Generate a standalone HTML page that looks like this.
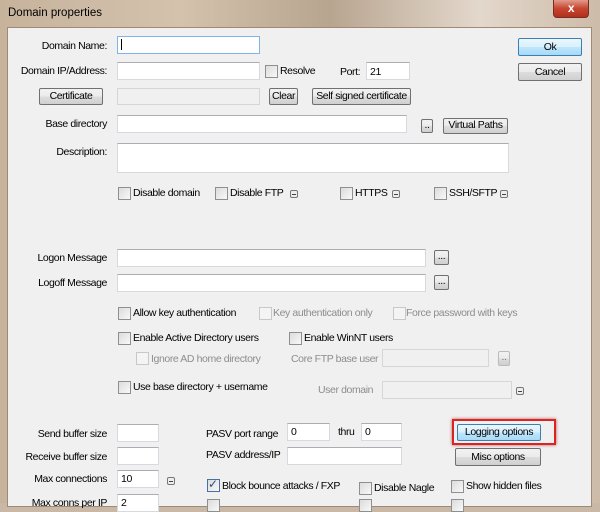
<!DOCTYPE html>
<html><head><meta charset="utf-8"><style>
*{box-sizing:border-box;margin:0;padding:0}
body{width:600px;height:503px;overflow:hidden;font-family:"Liberation Sans",sans-serif;font-size:10.5px;letter-spacing:-0.4px;color:#000;position:relative;background:#c9b8a6}
.frame{position:absolute;left:0;top:0;width:600px;height:503px;background:linear-gradient(90deg,#c7b39c 0%,#d4c2ad 30%,#b8a590 55%,#e3d8cc 80%,#cdbba8 100%)}
.client{position:absolute;left:7px;top:27px;width:585px;height:480px;background:#f0f0f0;border:1px solid #a08a74}
.t{position:absolute;white-space:nowrap;line-height:13px}
.r{text-align:right}
.in{position:absolute;background:#fff;border:1px solid #d6d9dd;border-top-color:#abadb3}
.dis{background:#f0f0f0;border-color:#d6d6d6}
.btn{position:absolute;border:1px solid #707070;border-radius:2px;background:linear-gradient(#f2f2f2,#ebebeb 50%,#dddddd 51%,#cfcfcf);text-align:center;line-height:14px;white-space:nowrap}
.cb{position:absolute;width:13px;height:13px;border:1px solid #8e8f8f;background:linear-gradient(135deg,#dcdcdc,#f8f8f8)}
.cbd{border-color:#c8c8c8;background:#f4f4f4}
.g{color:#8d8d8d}
.ic{position:absolute;width:8px;height:8px;border:1px solid #777;border-radius:2px;background:#eee}
.ic:after{content:"";position:absolute;left:1px;top:3px;width:4px;height:1px;background:#444}
</style></head><body>
<div class="frame"></div>
<div class="t" style="left:8px;top:7px;font-size:11.5px;letter-spacing:0">Domain properties</div>
<div style="position:absolute;left:553px;top:0;width:36px;height:18px;border:1px solid #7a2c22;border-top:none;border-radius:0 0 4px 4px;background:linear-gradient(#e39a8c,#c6452f 50%,#b0301e);color:#fff;text-align:center;font-weight:bold;font-size:12px;line-height:16px">x</div>
<div class="client"></div>

<div class="t r" style="left:0;width:107px;top:40px">Domain Name:</div>
<div class="in" style="left:117px;top:36px;width:143px;height:18px;border-color:#7eb4ea"></div>
<div style="position:absolute;left:121px;top:39px;width:1px;height:11px;background:#000"></div>
<div class="t r" style="left:0;width:107px;top:65px">Domain IP/Address:</div>
<div class="in" style="left:117px;top:62px;width:143px;height:18px"></div>
<div class="cb" style="left:265px;top:65px"></div><div class="t" style="left:280px;top:65px">Resolve</div>
<div class="t" style="left:340px;top:66px">Port:</div>
<div class="in" style="left:366px;top:62px;width:44px;height:18px"></div><div class="t" style="left:370px;top:66px">21</div>

<div class="btn" style="left:39px;top:88px;width:64px;height:17px">Certificate</div>
<div class="in dis" style="left:117px;top:88px;width:143px;height:17px"></div>
<div class="btn" style="left:269px;top:88px;width:29px;height:17px">Clear</div>
<div class="btn" style="left:312px;top:88px;width:99px;height:17px">Self signed certificate</div>

<div class="t r" style="left:0;width:107px;top:118px">Base directory</div>
<div class="in" style="left:117px;top:115px;width:290px;height:18px"></div>
<div class="btn" style="left:421px;top:119px;width:12px;height:14px;line-height:10px">..</div>
<div class="btn" style="left:443px;top:118px;width:65px;height:16px;line-height:13px">Virtual Paths</div>

<div class="t r" style="left:0;width:107px;top:146px">Description:</div>
<div class="in" style="left:117px;top:143px;width:392px;height:30px"></div>

<div class="cb" style="left:118px;top:187px"></div><div class="t" style="left:133px;top:187px">Disable domain</div>
<div class="cb" style="left:215px;top:187px"></div><div class="t" style="left:230px;top:187px">Disable FTP</div><div class="ic" style="left:290px;top:190px"></div>
<div class="cb" style="left:340px;top:187px"></div><div class="t" style="left:355px;top:187px">HTTPS</div><div class="ic" style="left:392px;top:190px"></div>
<div class="cb" style="left:434px;top:187px"></div><div class="t" style="left:449px;top:187px">SSH/SFTP</div><div class="ic" style="left:500px;top:190px"></div>

<div class="t r" style="left:0;width:107px;top:252px">Logon Message</div>
<div class="in" style="left:117px;top:249px;width:309px;height:18px"></div>
<div class="btn" style="left:434px;top:250px;width:15px;height:15px;line-height:10px">...</div>
<div class="t r" style="left:0;width:107px;top:277px">Logoff Message</div>
<div class="in" style="left:117px;top:274px;width:309px;height:18px"></div>
<div class="btn" style="left:434px;top:275px;width:15px;height:15px;line-height:10px">...</div>

<div class="cb" style="left:118px;top:307px"></div><div class="t" style="left:133px;top:307px">Allow key authentication</div>
<div class="cb cbd" style="left:259px;top:307px"></div><div class="t g" style="left:273px;top:307px">Key authentication only</div>
<div class="cb cbd" style="left:393px;top:307px"></div><div class="t g" style="left:406px;top:307px">Force password with keys</div>

<div class="cb" style="left:118px;top:332px"></div><div class="t" style="left:133px;top:332px">Enable Active Directory users</div>
<div class="cb" style="left:289px;top:332px"></div><div class="t" style="left:304px;top:332px">Enable WinNT users</div>

<div class="cb cbd" style="left:136px;top:352px"></div><div class="t g" style="left:151px;top:353px">Ignore AD home directory</div>
<div class="t g" style="left:291px;top:353px">Core FTP base user</div>
<div class="in dis" style="left:382px;top:349px;width:107px;height:18px"></div>
<div class="btn" style="left:498px;top:351px;width:12px;height:15px;line-height:10px;border-color:#bbb;color:#777">..</div>

<div class="cb" style="left:118px;top:381px"></div><div class="t" style="left:133px;top:381px">Use base directory + username</div>
<div class="t g" style="left:318px;top:384px">User domain</div>
<div class="in dis" style="left:382px;top:381px;width:130px;height:18px"></div>
<div class="ic" style="left:516px;top:387px"></div>

<div class="t r" style="left:0;width:107px;top:428px">Send buffer size</div>
<div class="in" style="left:117px;top:424px;width:42px;height:18px"></div>
<div class="t r" style="left:0;width:107px;top:451px">Receive buffer size</div>
<div class="in" style="left:117px;top:447px;width:42px;height:18px"></div>
<div class="t r" style="left:0;width:107px;top:473px">Max connections</div>
<div class="in" style="left:117px;top:470px;width:42px;height:18px"></div><div class="t" style="left:121px;top:473px">10</div>
<div class="ic" style="left:167px;top:477px"></div>
<div class="t r" style="left:0;width:107px;top:497px">Max conns per IP</div>
<div class="in" style="left:117px;top:494px;width:42px;height:18px"></div><div class="t" style="left:121px;top:497px">2</div>

<div class="t" style="left:206px;top:428px">PASV port range</div>
<div class="in" style="left:287px;top:423px;width:43px;height:18px"></div><div class="t" style="left:291px;top:426px">0</div>
<div class="t" style="left:338px;top:426px">thru</div>
<div class="in" style="left:361px;top:423px;width:41px;height:18px"></div><div class="t" style="left:365px;top:426px">0</div>
<div class="t" style="left:206px;top:449px">PASV address/IP</div>
<div class="in" style="left:287px;top:447px;width:115px;height:18px"></div>

<div class="cb" style="left:207px;top:479px;border-color:#4a6fa5"></div><div class="t" style="left:208px;top:478px;color:#2a4f8a;font-size:12px">✓</div>
<div class="t" style="left:222px;top:480px">Block bounce attacks / FXP</div>
<div class="cb" style="left:359px;top:482px"></div><div class="t" style="left:374px;top:482px">Disable Nagle</div>
<div class="cb" style="left:451px;top:480px"></div><div class="t" style="left:466px;top:480px">Show hidden files</div>
<div class="cb" style="left:207px;top:499px"></div><div class="cb" style="left:359px;top:499px"></div><div class="cb" style="left:451px;top:499px"></div>

<div style="position:absolute;left:452px;top:419px;width:104px;height:26px;border:2px solid #d22;box-shadow:0 0 3px #a55"></div>
<div class="btn" style="left:457px;top:424px;width:84px;height:17px;border-color:#3c7fb1;background:linear-gradient(#eaf6fd,#d9f0fc 50%,#bee6fd 51%,#a7d9f5)">Logging options</div>
<div class="btn" style="left:455px;top:448px;width:86px;height:18px;line-height:16px">Misc options</div>

<div class="btn" style="left:518px;top:38px;width:64px;height:18px;line-height:16px;border-color:#3c7fb1;background:linear-gradient(#eaf6fd,#d9f0fc 50%,#bee6fd 51%,#a7d9f5)">Ok</div>
<div class="btn" style="left:518px;top:63px;width:64px;height:18px;line-height:16px">Cancel</div>
</body></html>
